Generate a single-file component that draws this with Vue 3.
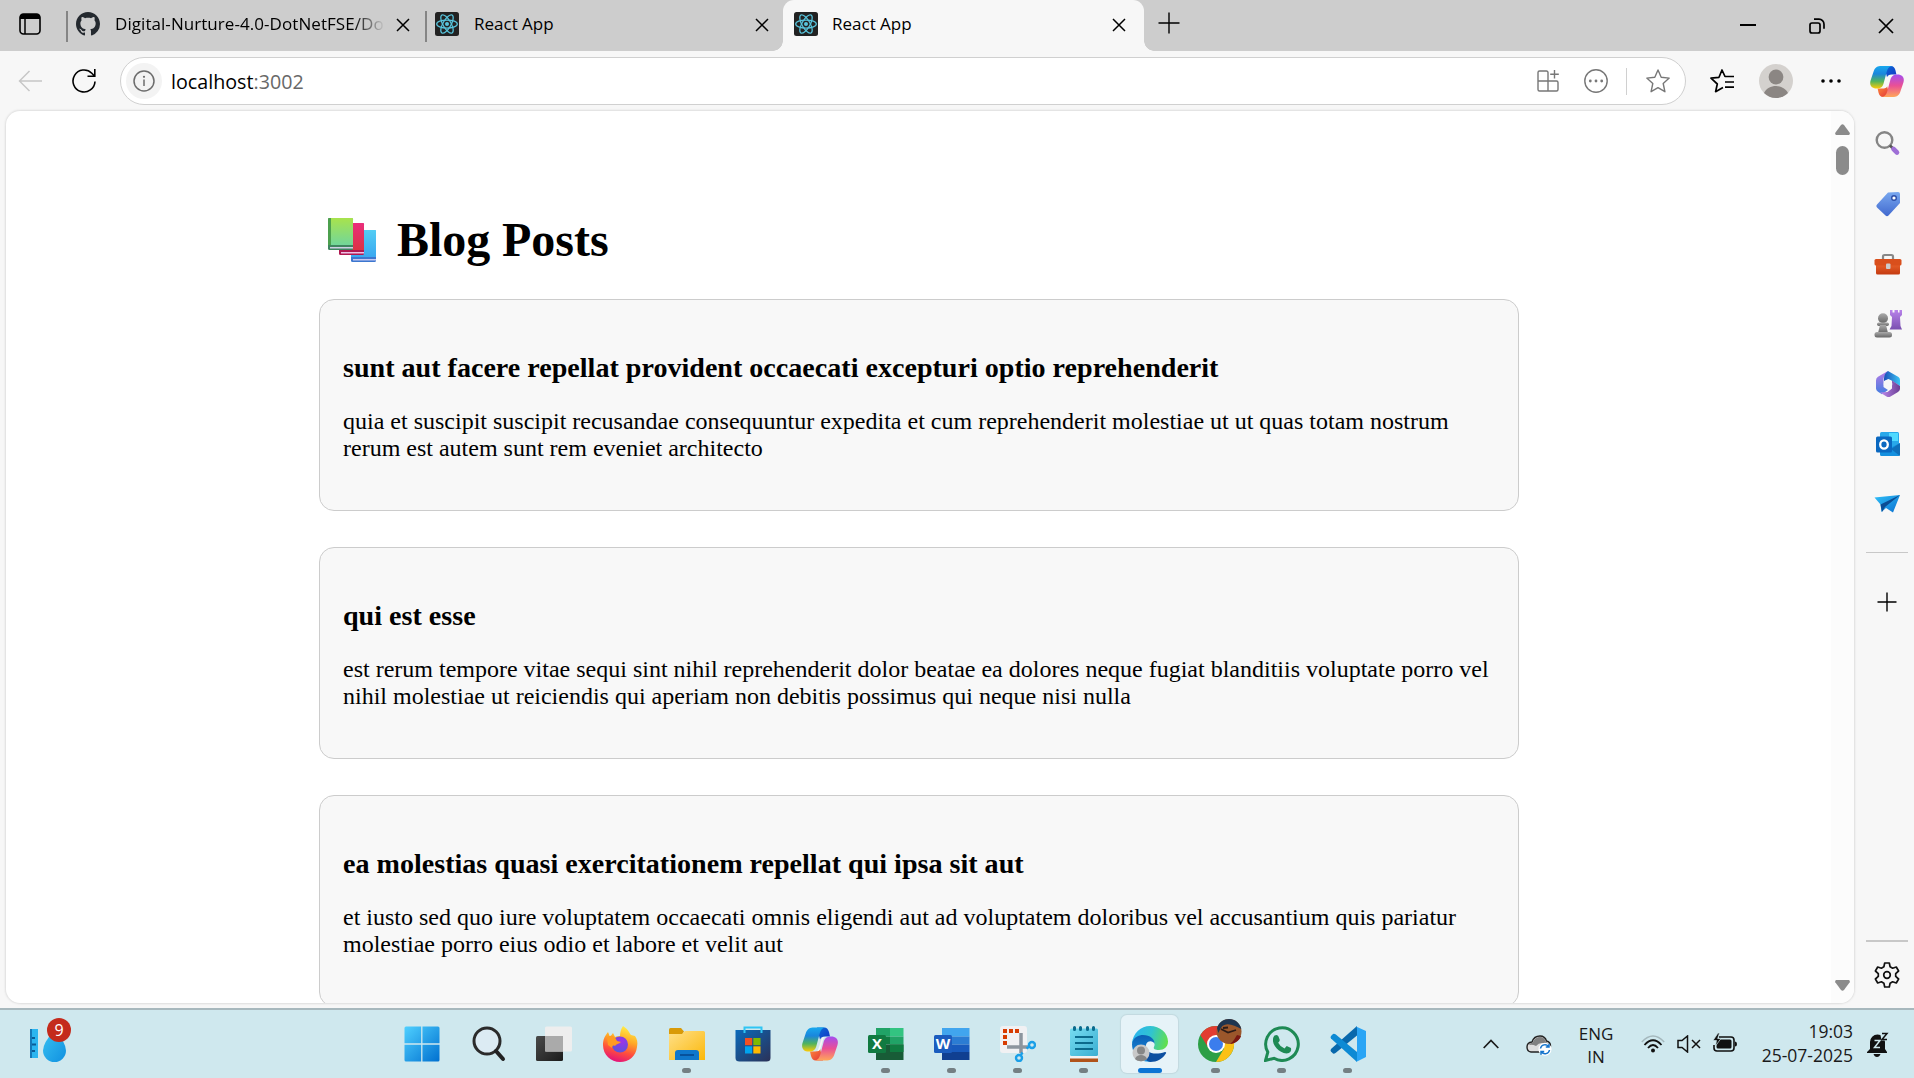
<script setup>
const posts = [
  {
    title: 'sunt aut facere repellat provident occaecati excepturi optio reprehenderit',
    body: 'quia et suscipit suscipit recusandae consequuntur expedita et cum reprehenderit molestiae ut ut quas totam nostrum rerum est autem sunt rem eveniet architecto',
  },
  {
    title: 'qui est esse',
    body: 'est rerum tempore vitae sequi sint nihil reprehenderit dolor beatae ea dolores neque fugiat blanditiis voluptate porro vel nihil molestiae ut reiciendis qui aperiam non debitis possimus qui neque nisi nulla',
  },
  {
    title: 'ea molestias quasi exercitationem repellat qui ipsa sit aut',
    body: 'et iusto sed quo iure voluptatem occaecati omnis eligendi aut ad voluptatem doloribus vel accusantium quis pariatur molestiae porro eius odio et labore et velit aut',
  },
]
</script>

<template>
  <div class="screen">
    <svg class="defs" aria-hidden="true">
      <defs>
        <linearGradient id="cpA" x1="0" y1="0" x2="0" y2="1">
          <stop offset="0" stop-color="#18a8ee" /><stop offset=".35" stop-color="#1a86dc" />
          <stop offset=".68" stop-color="#52b45c" /><stop offset="1" stop-color="#ffcb05" />
        </linearGradient>
        <linearGradient id="cpB" x1="0" y1="0" x2="0" y2="1">
          <stop offset="0" stop-color="#a44df0" /><stop offset=".5" stop-color="#ea5095" />
          <stop offset="1" stop-color="#ffa759" />
        </linearGradient>
        <linearGradient id="cpC" x1="0" y1="0" x2="1" y2="1">
          <stop offset="0" stop-color="#0a6fd8" /><stop offset="1" stop-color="#1434c4" />
        </linearGradient>
        <linearGradient id="cpD" x1="0" y1="0" x2="1" y2="1">
          <stop offset="0" stop-color="#ff8d3a" /><stop offset="1" stop-color="#e0303a" />
        </linearGradient>
        <linearGradient id="win" x1="0" y1="0" x2="1" y2="1">
          <stop offset="0" stop-color="#4fd0ff" /><stop offset="1" stop-color="#0070d0" />
        </linearGradient>
        <linearGradient id="purp" x1="0" y1="0" x2="0" y2="1">
          <stop offset="0" stop-color="#b882ea" /><stop offset="1" stop-color="#7a50b0" />
        </linearGradient>
        <linearGradient id="grey" x1="0" y1="0" x2="0" y2="1">
          <stop offset="0" stop-color="#aaa" /><stop offset="1" stop-color="#666" />
        </linearGradient>
        <linearGradient id="tag" x1="0" y1="0" x2="0" y2="1">
          <stop offset="0" stop-color="#79a8ef" /><stop offset="1" stop-color="#4169cf" />
        </linearGradient>
        <linearGradient id="box" x1="0" y1="0" x2="0" y2="1">
          <stop offset="0" stop-color="#e8612a" /><stop offset="1" stop-color="#c43a10" />
        </linearGradient>
        <linearGradient id="plane" x1="0" y1="0" x2="1" y2="1">
          <stop offset="0" stop-color="#2fc0f8" /><stop offset="1" stop-color="#0a6fd0" />
        </linearGradient>
        <linearGradient id="folder" x1="0" y1="0" x2="1" y2="1">
          <stop offset="0" stop-color="#ffe08a" /><stop offset="1" stop-color="#fbb80a" />
        </linearGradient>
        <linearGradient id="store" x1="0" y1="0" x2="1" y2="1">
          <stop offset="0" stop-color="#0a6abb" /><stop offset="1" stop-color="#2b3157" />
        </linearGradient>
        <linearGradient id="fox" x1=".7" y1="0" x2=".4" y2="1">
          <stop offset="0" stop-color="#fff24a" /><stop offset=".4" stop-color="#ffa726" />
          <stop offset=".7" stop-color="#ff4f3c" /><stop offset="1" stop-color="#e3127a" />
        </linearGradient>
        <radialGradient id="foxin" cx=".6" cy=".3" r=".8">
          <stop offset="0" stop-color="#a032e8" /><stop offset="1" stop-color="#5158d8" />
        </radialGradient>
        <linearGradient id="edgeTop" x1="0" y1=".4" x2="1" y2=".6">
          <stop offset="0" stop-color="#2ab4f0" /><stop offset=".5" stop-color="#31c4cf" />
          <stop offset="1" stop-color="#62e04a" />
        </linearGradient>
        <linearGradient id="edgeMid" x1="0" y1="0" x2="0" y2="1">
          <stop offset="0" stop-color="#0c5fb4" /><stop offset="1" stop-color="#1a93e4" />
        </linearGradient>
        <linearGradient id="drop" x1="0" y1="0" x2="1" y2="1">
          <stop offset="0" stop-color="#38c2f2" /><stop offset="1" stop-color="#1090e0" />
        </linearGradient>
        <linearGradient id="tvD" x1="0" y1="0" x2="1" y2="1">
          <stop offset="0" stop-color="#4a4a4a" /><stop offset="1" stop-color="#1b1b1b" />
        </linearGradient>
        <linearGradient id="note" x1="0" y1="0" x2="1" y2="1">
          <stop offset="0" stop-color="#76dcf0" /><stop offset="1" stop-color="#3aaed2" />
        </linearGradient>
        <linearGradient id="bookG" x1="0" y1="0" x2="0" y2="1">
          <stop offset="0" stop-color="#a8e34c" /><stop offset="1" stop-color="#72d69a" />
        </linearGradient>
        <linearGradient id="bookR" x1="0" y1="0" x2="0" y2="1">
          <stop offset="0" stop-color="#ea2d7c" /><stop offset="1" stop-color="#dc3344" />
        </linearGradient>
        <linearGradient id="bookB" x1="0" y1="0" x2="0" y2="1">
          <stop offset="0" stop-color="#53cdf4" /><stop offset="1" stop-color="#3aa8f0" />
        </linearGradient>
        <linearGradient id="m365a" x1="0" y1="0" x2="1" y2="0">
          <stop offset="0" stop-color="#1a4fb8" /><stop offset="1" stop-color="#3cc4f4" />
        </linearGradient>
        <linearGradient id="m365b" x1="0" y1="0" x2="0" y2="1">
          <stop offset="0" stop-color="#b77be6" /><stop offset="1" stop-color="#3f7de0" />
        </linearGradient>
        <linearGradient id="m365c" x1="0" y1="0" x2="1" y2="0">
          <stop offset="0" stop-color="#c08cf0" /><stop offset="1" stop-color="#6a3d94" />
        </linearGradient>
      </defs>
      <symbol id="copilot" viewBox="0 0 36 33">
        <path d="M15 0h7c3 0 4.200 2 5 4.500L28 9h-5c-3 0-4 1-5 3z" fill="url(#cpC)" />
        <path d="M21 33h-7c-3 0-4.200-2-5-4.500L8 24h5c3 0 4-1 5-3z" fill="url(#cpD)" />
        <path d="M12 0h11c-3 .6-4.500 3-5.300 6L14.500 18c-1 4-3 6-7.500 6C1 24-.8 20 .5 15.500L4 5C5.500 1.300 8 0 12 0z" fill="url(#cpA)" />
        <path d="M24 33H13c3-.6 4.500-3 5.300-6L21.500 15c1-4 3-6 7.500-6 6 0 7.800 4 6.500 8.500L32 28c-1.500 3.700-4 5-8 5z" fill="url(#cpB)" />
        <path d="M19.500 11.500q.8-2 3-2-1.200 1.500-1.700 3.500l-2.500 8.500q-.7 2.300-3.300 2.300 1.300-1.500 2-4z" fill="#f7f7f7" />
      </symbol>
      <symbol id="react" viewBox="0 0 24 24">
        <rect width="24" height="24" rx="2.500" fill="#222" />
        <g fill="none" stroke="#58c4dc" stroke-width="1.250">
          <ellipse cx="12" cy="12" rx="10.300" ry="4" />
          <ellipse cx="12" cy="12" rx="10.300" ry="4" transform="rotate(60 12 12)" />
          <ellipse cx="12" cy="12" rx="10.300" ry="4" transform="rotate(120 12 12)" />
        </g>
        <circle cx="12" cy="12" r="2" fill="#58c4dc" />
      </symbol>
      <symbol id="x" viewBox="0 0 14 14">
        <path d="M1 1l12 12M13 1L1 13" fill="none" stroke="#000" stroke-width="1.500" />
      </symbol>
    </svg>

    <header class="tabs">
      <svg class="tab-actions" viewBox="0 0 22 22" width="22" height="22">
        <rect x="1" y="1" width="20" height="20" rx="3.500" fill="none" stroke="#000" stroke-width="1.600" />
        <path d="M1 6V4a3 3 0 0 1 3-3h14a3 3 0 0 1 3 3v2z" /><path d="M6 6v15" stroke="#000" stroke-width="1.500" />
      </svg>
      <div class="tab tab-github">
        <svg class="fav" viewBox="0 0 16 16" width="24" height="24">
          <path fill="#24292f" d="M8 0C3.580 0 0 3.580 0 8c0 3.540 2.290 6.530 5.470 7.590.4.070.55-.17.55-.38 0-.19-.01-.82-.01-1.490-2.010.37-2.530-.49-2.690-.94-.09-.23-.48-.94-.82-1.130-.28-.15-.68-.52-.01-.53.63-.01 1.080.58 1.230.82.72 1.210 1.870.87 2.330.66.070-.52.28-.87.51-1.070-1.780-.2-3.640-.89-3.640-3.950 0-.87.31-1.590.82-2.150-.08-.2-.36-1.020.08-2.120 0 0 .67-.21 2.200.82.64-.18 1.320-.27 2-.27s1.360.09 2 .27c1.530-1.040 2.200-.82 2.200-.82.44 1.100.16 1.920.08 2.120.51.56.82 1.270.82 2.150 0 3.070-1.870 3.750-3.650 3.950.29.25.54.73.54 1.480 0 1.070-.01 1.930-.01 2.200 0 .21.15.46.55.38A8.010 8.010 0 0 0 16 8c0-4.420-3.580-8-8-8z" />
        </svg>
        <span class="tab-title faded">Digital-Nurture-4.0-DotNetFSE/Do</span>
        <svg class="close" width="14" height="14"><use href="#x" /></svg>
      </div>
      <div class="tab tab-react">
        <svg class="fav" width="24" height="24"><use href="#react" /></svg>
        <span class="tab-title">React App</span>
        <svg class="close" width="14" height="14"><use href="#x" /></svg>
      </div>
      <div class="tab tab-active">
        <svg class="fav" width="24" height="24"><use href="#react" /></svg>
        <span class="tab-title">React App</span>
        <svg class="close" width="14" height="14"><use href="#x" /></svg>
      </div>
      <svg class="new-tab" viewBox="0 0 22 22" width="22" height="22"><path d="M11 .5v21M.5 11h21" stroke="#000" stroke-width="1.400" /></svg>
      <div class="controls">
        <svg viewBox="0 0 16 16" width="16" height="16"><path d="M0 7h16" stroke="#000" stroke-width="2" /></svg>
        <svg viewBox="0 0 16 16" width="16" height="16" fill="none" stroke="#000" stroke-width="1.700">
          <rect x="1" y="5" width="10" height="10" rx="2" /><path d="M5 1.200h5a5 5 0 0 1 5 5v4.500" />
        </svg>
        <svg viewBox="0 0 16 16" width="16" height="16"><path d="M1 1l14 14M15 1L1 15" stroke="#000" stroke-width="1.700" /></svg>
      </div>
    </header>

    <div class="toolbar">
      <svg class="back" viewBox="0 0 24 22" width="24" height="22" fill="none" stroke="#c6c6c6" stroke-width="1.500"><path d="M11.500 1L1.500 11l10 10M1.500 11H24" /></svg>
      <svg class="reload" viewBox="0 0 24 24" width="24" height="24" fill="none" stroke="#000" stroke-width="1.600">
        <path d="M23 12.500A11 11 0 1 1 19.800 4.200L22.500 7M22.800 0v7.200h-7.300" />
      </svg>
      <div class="address">
        <div class="info">
          <svg viewBox="0 0 22 22" width="22" height="22"><circle cx="11" cy="11" r="10" fill="none" stroke="#6c6c6c" stroke-width="1.500" /><circle cx="11" cy="6.800" r="1.100" fill="#6c6c6c" /><path d="M11 9.500v6.500" stroke="#6c6c6c" stroke-width="1.500" /></svg>
        </div>
        <span class="url">localhost<span>:3002</span></span>
        <div class="address-icons">
          <svg viewBox="0 0 22 22" width="22" height="22" fill="none" stroke="#777" stroke-width="1.400">
            <path d="M11 11V2.500A1.500 1.500 0 0 0 9.500 1h-7A1.500 1.500 0 0 0 1 2.500v17A1.500 1.500 0 0 0 2.500 21h17a1.500 1.500 0 0 0 1.500-1.500v-7a1.500 1.500 0 0 0-1.500-1.500H1M11 11v10M17.500 0v8.500M13.200 4.300h8.600" />
          </svg>
          <svg viewBox="0 0 24 24" width="24" height="24"><circle cx="12" cy="12" r="11.200" fill="none" stroke="#777" stroke-width="1.400" /><g fill="#777"><circle cx="6.300" cy="12" r="1.400" /><circle cx="12" cy="12" r="1.400" /><circle cx="17.700" cy="12" r="1.400" /></g></svg>
          <i></i>
          <svg viewBox="0 0 24 24" width="24" height="24" fill="none" stroke="#777" stroke-width="1.400" stroke-linejoin="round"><path d="M12 1l3.200 7.200 8 .9-6 5.400 1.700 8.200-6.900-4-6.900 4 1.700-8.200-6-5.400 8-.9z" /></svg>
        </div>
      </div>
      <svg class="favorites" viewBox="0 0 24 24" width="24" height="24" fill="none" stroke="#000" stroke-width="1.700" stroke-linejoin="round">
        <path d="M13 18.500l-7.400 4.200 1.700-7.700-6.300-5.800 8-.9L12 1l3 6.500h9M15 13h9M15 18.200h9" />
      </svg>
      <svg class="profile" viewBox="0 0 34 34" width="34" height="34">
        <circle cx="17" cy="17" r="17" fill="#d4d1ce" /><circle cx="17" cy="13" r="7.400" fill="#8b8683" />
        <path d="M5 29c2-4.500 7-7 12-7s10 2.500 12 7c-3 3-7.500 5-12 5s-9-2-12-5z" fill="#8b8683" />
      </svg>
      <svg class="more" viewBox="0 0 20 4" width="20" height="4"><circle cx="2" cy="2" r="1.800" /><circle cx="10" cy="2" r="1.800" /><circle cx="18" cy="2" r="1.800" /></svg>
      <svg class="copilot" width="34" height="31"><use href="#copilot" /></svg>
    </div>

    <div class="middle">
      <div class="viewport">
        <main class="page">
          <h1>
            <svg viewBox="0 0 48 44" width="48" height="44">
              <rect x="23" y="12" width="25" height="32" rx="1.500" fill="#3c77cf" /><path d="M24 12h23a1 1 0 0 1 1 1v26H23V13z" fill="url(#bookB)" /><path d="M25 41h23v1.500H25z" fill="#c5c8f2" />
              <rect x="11" y="5" width="25" height="32" rx="1.500" fill="#b01850" /><path d="M12 5h23a1 1 0 0 1 1 1v26H11V6z" fill="url(#bookR)" /><path d="M13 34h23v1.500H13z" fill="#ecc0e4" />
              <rect width="25" height="32" rx="1.500" fill="#3f8560" /><path d="M3 0h21a1 1 0 0 1 1 1v26H3z" fill="url(#bookG)" /><path d="M0 1a1 1 0 0 1 1-1h2v27H0z" fill="#4ca04e" /><path d="M2 29h23v1.500H2z" fill="#cfd0e6" />
            </svg>
            <span>Blog Posts</span>
          </h1>
          <article v-for="post in posts" :key="post.title">
            <h3>{{ post.title }}</h3>
            <p>{{ post.body }}</p>
          </article>
        </main>
        <div class="scrollbar">
          <svg viewBox="0 0 15 11" width="15" height="11"><path d="M6 1q1.500-1.600 3 0l5.700 7.800q.6 2-1 2.200H1.300q-1.600-.2-1-2.200z" fill="#8b8b8b" /></svg>
          <div class="thumb"></div>
          <svg class="down" viewBox="0 0 15 11" width="15" height="11"><path d="M6 10q1.500 1.600 3 0l5.700-7.800q.6-2-1-2.200H1.300q-1.600.2-1 2.200z" fill="#8b8b8b" /></svg>
        </div>
      </div>
      <aside class="sidebar">
        <svg viewBox="0 0 28 28" width="28" height="28"><circle cx="10.500" cy="11" r="7.800" fill="none" stroke="#858585" stroke-width="2.400" /><path d="M16 16.500l3 3" stroke="#555" stroke-width="2.600" /><path d="M19.500 20l3.500 3.500" stroke="#9e6fd6" stroke-width="4.600" stroke-linecap="round" /></svg>
        <svg viewBox="0 0 28 28" width="28" height="28"><path d="M14 2.500L24 2q2 0 2 2v9l-11.500 12.500q-1.500 1.500-3 0l-8.500-8q-1.500-1.500 0-3z" fill="url(#tag)" /><circle cx="20" cy="8" r="2.300" fill="#fff" stroke="#2e4fa8" stroke-width="1.400" /></svg>
        <svg viewBox="0 0 28 28" width="28" height="28"><path d="M9 9V6.500Q9 5 10.500 5h7q1.500 0 1.500 1.500V9" fill="none" stroke="#888" stroke-width="2.200" /><path d="M2 14h24v9q0 1.500-1.500 1.500h-21Q2 24.500 2 23z" fill="url(#box)" /><rect x=".5" y="9" width="27" height="6.500" rx="1.500" fill="#d94f1c" /><rect x="12" y="13.500" width="4.500" height="5.500" rx="1" fill="#ccc" /></svg>
        <svg viewBox="0 0 28 28" width="28" height="28"><path d="M16 0h2.500v2.500h2V0H24v2.500h1.500V0H28v5l-2 2 .5 9 1.500 3.500H15.500L17.500 16 18 7l-2-2z" fill="url(#purp)" /><g fill="url(#grey)"><circle cx="9" cy="8.300" r="5" /><rect x="3" y="12.500" width="12" height="3.500" rx="1.700" /><path d="M6 15h6l2 8H4z" /><rect x=".5" y="22" width="17.500" height="5.500" rx="2.500" /></g></svg>
        <svg viewBox="0 0 28 28" width="28" height="28"><path d="M13 1.500L4 6.800Q2 8 2 10.500v8q0 2 2 3.300l4 2.500L14 20l-4.500-3v-7q0-5 5-8.500z" fill="url(#m365b)" /><path d="M10 8.500q0-5 4-7.500l10.500 6Q26 8 26 10v6l-8.500-5.500-3-1.500L10 11z" fill="url(#m365a)" /><path d="M6 22.500l7.500-.5L18 18.500V10.500L26 16v3q0 1.700-2 3l-7.500 4.500q-2 1.200-4 0z" fill="url(#m365c)" /><circle cx="14" cy="14" r="4.300" fill="#f7f7f7" /></svg>
        <svg viewBox="0 0 28 28" width="28" height="28"><rect x="6" y="2" width="19" height="15" rx="1.500" fill="#28a8ea" /><rect x="15" y="3" width="9" height="8" fill="#50d9ff" /><path d="M6 14l10 4 10-5v11.500q0 1.500-1.500 1.500h-17Q6 26 6 24.500z" fill="#1490df" /><path d="M17 19l9 7V13z" fill="#0a5ea8" opacity=".65" /><rect x="2" y="6.500" width="16" height="16" rx="1.500" fill="#0a68c0" /><ellipse cx="10" cy="14.500" rx="3.800" ry="4.200" fill="none" stroke="#fff" stroke-width="2.300" /></svg>
        <svg viewBox="0 0 28 28" width="28" height="28"><path d="M.5 7.500L26 5l-7 17.500-7-4.500-4.500 4-1-7.500z" fill="url(#plane)" /><path d="M6.500 14.500L26 5 11 17l-3 5z" fill="#0a4c94" /></svg>
        <hr />
        <svg class="add" viewBox="0 0 20 20" width="20" height="20"><path d="M10 .5v19M.5 10h19" stroke="#000" stroke-width="1.400" /></svg>
        <hr class="bottom" />
        <svg class="gear" viewBox="0 0 26 26" width="26" height="26" fill="none" stroke="#111" stroke-width="1.700" stroke-linejoin="round">
          <path d="M10.700 1h4.600l.8 3.800 2.500 1.400 3.700-1.200L24.600 9l-2.900 2.600v2.800l2.900 2.600-2.300 4-3.700-1.200-2.500 1.400-.8 3.800h-4.600l-.8-3.800-2.500-1.400L3.700 21l-2.300-4 2.900-2.600v-2.800L1.400 9l2.300-4 3.700 1.200 2.500-1.400z" /><circle cx="13" cy="13" r="3.300" />
        </svg>
      </aside>
    </div>

    <footer class="taskbar">
      <div class="weather">
        <svg viewBox="0 0 37 34" width="37" height="34"><rect y="1" width="8" height="29" fill="#2bb5f0" /><path d="M0 1h2v29H0z" fill="#1478b8" /><path d="M2 10h3M2 16.500h4M2 23h3" stroke="#0a5c98" stroke-width="2" /><path d="M24.500 2Q13 15 13 22.500a11.500 11.500 0 0 0 23 0Q36 15 24.500 2z" fill="url(#drop)" /></svg>
        <span>9</span>
      </div>
      <nav class="apps">
        <div class="app"><svg viewBox="0 0 36 36" width="36" height="36"><rect x=".5" y=".5" width="35" height="35" rx="1.500" fill="url(#win)" /><path d="M17.800 0v36M0 18h36" stroke="#cfe8ee" stroke-width="1.300" /></svg></div>
        <div class="app"><svg viewBox="0 0 36 36" width="36" height="36"><circle cx="17" cy="15" r="13" fill="#dcebf3" stroke="#2b2b2b" stroke-width="3" /><path d="M26 25l7 8" stroke="#222" stroke-width="4" stroke-linecap="round" /></svg></div>
        <div class="app"><svg viewBox="0 0 36 36" width="36" height="36"><rect y="10" width="27" height="25" rx="1.500" fill="url(#tvD)" /><rect x="9" y=".5" width="27" height="25" rx="1.500" fill="#eee" /><path d="M9 10h18v15.500H9z" fill="#aaa" /></svg></div>
        <div class="app"><svg viewBox="0 0 36 36" width="36" height="36"><path d="M21 0c6 4 6 7 8 9l4 1c2 3 3 6 2 11-1 9-8 15-17 15S1 29 1 19c0-6 2-9 5-13l2 5 3-4 2 4c2-1 4-1 5-1 0-4 1-7 3-10z" fill="url(#fox)" /><circle cx="18" cy="18.500" r="8" fill="url(#foxin)" /><path d="M5 12c3-4 8-2 10 3l4 1c-2 2-5 2-6 4-2-1-3 0-3 2l-4-3z" fill="#ff9a22" /></svg></div>
        <div class="app"><svg viewBox="0 0 36 36" width="36" height="36"><path d="M0 3.500Q0 2 1.500 2H12l3 3.500L13 9H0z" fill="#d99a08" /><path d="M0 8h13l3-3h18.500Q36 5 36 6.500V34H0z" fill="url(#folder)" /><path d="M6 34v-7q0-3 3-3h18q3 0 3 3v7z" fill="#0f77cb" /><path d="M11 29h14" stroke="#07519b" stroke-width="2" /></svg><i></i></div>
        <div class="app"><svg viewBox="0 0 36 36" width="36" height="36"><path d="M.5 4h35v28q0 3.500-4 3.500h-27q-4 0-4-3.500z" fill="url(#store)" /><path d="M9.500 7V1.500h17V7" fill="none" stroke="#2fc5f4" stroke-width="2" /><path d="M10 12h7.200v7.200H10z" fill="#f25022" /><path d="M18.300 12h7.200v7.200h-7.200z" fill="#7fba00" /><path d="M10 20.300h7.200v7.200H10z" fill="#00a4ef" /><path d="M18.300 20.300h7.200v7.200h-7.200z" fill="#ffb900" /></svg></div>
        <div class="app"><svg width="36" height="36"><use href="#copilot" /></svg></div>
        <div class="app"><svg viewBox="0 0 36 36" width="36" height="36"><path d="M8 2h14v8.500H8z" fill="#21a366" /><path d="M22 2h13.500v8.500H22z" fill="#33c481" /><path d="M8 10.500h14v8H8z" fill="#107c41" /><path d="M22 10.500h13.500v8H22z" fill="#21a366" /><path d="M8 18.500h27.500V34H8z" fill="#185c37" /><path d="M22 18.500h13.500v7.500H22z" fill="#107c41" /><rect y="9" width="18" height="18" rx="1.500" fill="#117a41" /><text x="9" y="23" text-anchor="middle" class="office">X</text></svg><i></i></div>
        <div class="app"><svg viewBox="0 0 36 36" width="36" height="36"><path d="M8 2h27.500v8.500H8z" fill="#41a5ee" /><path d="M8 10.500h27.500v8H8z" fill="#2b7cd3" /><path d="M8 18.500h27.500V26H8z" fill="#185abd" /><path d="M8 26h27.500v8H8z" fill="#103f91" /><rect y="9" width="18" height="18" rx="1.500" fill="#1b5cbe" /><text x="9" y="23" text-anchor="middle" class="office">W</text></svg><i></i></div>
        <div class="app"><svg viewBox="0 0 36 36" width="36" height="36"><rect width="27" height="27" rx="3" fill="#f1f1f3" /><path d="M5 19V5h15" fill="none" stroke="#d83b01" stroke-width="4" stroke-dasharray="4 2" /><path d="M21 7v20M7 21h21" stroke="#8d959e" stroke-width="3.500" /><g fill="none" stroke="#1a9fe8" stroke-width="2.400"><circle cx="19" cy="32" r="3" /><circle cx="32" cy="19" r="3" /><path d="M20.500 29.500l2-3M29.500 20.500l-3 2" /></g></svg><i></i></div>
        <div class="app"><svg viewBox="0 0 36 36" width="36" height="36"><path d="M4 30h28v6H4z" fill="#b0531a" /><path d="M4 29h28v3.500H4z" fill="#f4f1f0" /><rect x="4" y="2.500" width="28" height="27.500" rx="1.500" fill="url(#note)" /><path d="M9 11h18M9 17h18M9 23h18" stroke="#0b6a8c" stroke-width="2" /><path d="M8.500 1.500v2M14.500 1.500v2M21.500 1.500v2M27.500 1.500v2" stroke="#0b6a8c" stroke-width="3" stroke-linecap="round" /></svg><i></i></div>
        <div class="app active"><svg viewBox="0 0 36 36" width="36" height="36"><path d="M0 17C1 7 9 0 18 0c10 0 18 7 18 15.500 0 5.500-4 8.500-9 8.500-4 0-6-1.300-5-3 2-4-1-8-5-8z" fill="url(#edgeTop)" /><path d="M0 18C1 11 7 9 11 9c7 0 12 4 11.500 9-1-3-6-4-8-.5-3 6 1 13 10.500 15-3 3-8 3.500-11 3C5 34 0 26 0 18z" fill="url(#edgeMid)" /><path d="M13 19c0 7 8 11 20 7q2 0 .5 2c-3 4.500-8 8-15.500 8-7-2-10-11-5-17z" fill="#0c4fa0" /><circle cx="9" cy="27" r="8.500" fill="#c8c8c8" /><circle cx="9" cy="24.500" r="4" fill="#868686" /><path d="M3 33c1-3 3.500-4 6-4s5 1 6 4c-3 3-9 3-12 0z" fill="#868686" /></svg><i></i></div>
        <div class="app"><svg class="wide" viewBox="0 0 44 43" width="44" height="43"><g transform="translate(0 7)"><circle cx="18" cy="18" r="18" fill="#2c9f46" /><path d="M2.400 9A18 18 0 0 1 33.600 9H18z" fill="#e23c30" /><path d="M2.400 9L10.500 22 18 9z" fill="#e23c30" /><path d="M33.600 9A18 18 0 0 1 18 36l8-13.500L18 9z" fill="#fbc116" /><circle cx="18" cy="18" r="9" fill="#fff" /><circle cx="18" cy="18" r="7" fill="#3b7ded" /></g><circle cx="31" cy="12.500" r="12.500" fill="#9b572b" /><path d="M19 9C21 3 26 0 31 0c6 0 11 4 12.300 10-6-3-12-6-17-4-3 1-4 4-6 8z" fill="#1f3550" /><path d="M23 10l7 3.500 8-2.500M25 9l5-.5" fill="none" stroke="#2d1c18" stroke-width="1.800" /><path d="M43 17c-1 4-6 8-11 8 4-3 5-6 7-9z" fill="#7a1812" /></svg><i></i></div>
        <div class="app"><svg viewBox="0 0 36 36" width="36" height="36"><path d="M1.500 34.500l2.300-8.400A16.300 16.300 0 1 1 10 32.300z" fill="none" stroke="#1e8a54" stroke-width="3" /><path d="M10.500 9.500q3-1.500 4 1l1.300 3.500q0 1-1.600 2.700 2 4 6.300 5.800l2.200-2.400 4.300 2q1.200 5-4.500 5.400C15 27 8 19 9 13q0-2 1.500-3.500z" fill="#1e8a54" /></svg><i></i></div>
        <div class="app"><svg viewBox="0 0 36 36" width="36" height="36"><path d="M27 0L1 23q-1 1.500 0 2.500l2 2q1 .5 2.500-.5L27 9.500z" fill="#0868ac" /><path d="M27 36L1 12.500Q0 11 1 10l2-2q1-.7 2.500.3L27 26z" fill="#0d8ad4" /><path d="M26 .5L36 5v26l-10 5q1-1 1-3V3q0-2-1-2.500z" fill="#2aa5f5" /></svg><i></i></div>
      </nav>
      <div class="tray">
        <svg class="chev" viewBox="0 0 16 10" width="16" height="10" fill="none" stroke="#1a1a1a" stroke-width="1.700"><path d="M.7 9L8 1.500 15.300 9" /></svg>
        <svg class="cloud" viewBox="0 0 26 22" width="26" height="22"><path d="M5 18q-4-.5-4-5 0-4.500 5-5 2-6 8-6 5 0 6.500 5 4 1 4 5 0 6-4 6z" fill="#ddd" stroke="#222" stroke-width="1.400" /><path d="M3 11q1-2.500 3.700-2.500Q9 3 14 3q4.500 0 6 5 3 1 3 3l-7-2q-3.500 0-6 3-3.500-2-7-1z" fill="#808080" /><circle cx="19" cy="15.200" r="6.500" fill="#fff" /><g fill="none" stroke="#1474cc" stroke-width="1.500"><path d="M14.500 14.500a4.500 4.500 0 0 1 8-2M23.500 16a4.500 4.500 0 0 1-8 2M23 9.800V13h-3.200M15 20.700V17.500h3.200" /></g></svg>
        <div class="lang"><span>ENG</span><span>IN</span></div>
        <svg class="wifi" viewBox="0 0 24 18" width="24" height="18" fill="none" stroke="#111" stroke-width="1.800"><path d="M.8 7q11.200-12 22.400 0" stroke="#a5b8bd" stroke-width="1.400" /><path d="M3.500 10q8.500-9.500 17 0M7 13q5-6 10 0" /><circle cx="12" cy="15.500" r="2" fill="#111" stroke="none" /></svg>
        <svg class="vol" viewBox="0 0 24 18" width="24" height="18" fill="none" stroke="#111" stroke-width="1.500"><path d="M1 5.500h4L10.500 1v16L5 12.500H1zM15 5l8 8M23 5l-8 8" /></svg>
        <svg class="bat" viewBox="0 0 24 20" width="24" height="20"><path d="M6 4h12q3 0 3 3v8q0 3-3 3H4q-3 0-3-3v-3" fill="none" stroke="#111" stroke-width="1.600" /><rect x="3.500" y="6.500" width="15" height="9" rx="1.500" fill="#111" /><path d="M22 8.500q2 0 2 2.500t-2 2.500z" fill="#111" /><path d="M5 0L0 7.500h3.500L2.500 13 8 5.500H4.700L6.500 0z" fill="#111" stroke="#cfe8ee" stroke-width=".7" /></svg>
        <div class="clock"><span>19:03</span><span>25-07-2025</span></div>
        <svg class="bell" viewBox="0 0 22 26" width="22" height="26"><path d="M3 18V11a7.500 7.500 0 0 1 15 0v7l2 3v1H0v-1zM6.500 23h7q-1 3-3.500 3t-3.500-3z" fill="#111" /><path d="M7.500 9.500H13l-5.500 7H13" fill="none" stroke="#cfe8ee" stroke-width="1.500" /><path d="M13 1h9v8.500h-7.500z" fill="#cfe8ee" /><path d="M15 2.500h5l-5 6h5" fill="none" stroke="#111" stroke-width="1.500" /></svg>
      </div>
    </footer>
  </div>
</template>

<style>
body { margin: 0; overflow: hidden; }
</style>

<style scoped>
* { box-sizing: border-box; }
svg { display: block; flex: none; }
.screen { width: 1914px; height: 1078px; display: flex; flex-direction: column; background: #f7f7f7; color: #000; font-family: "Open Sans", "Noto Sans", sans-serif; font-size: 17px; overflow: hidden; }
.defs { position: absolute; width: 0; height: 0; }

.tabs { height: 51px; flex: none; display: flex; background: #cdcdcd; }
.tab-actions { margin: 13px 25px 0 19px; }
.tab { position: relative; display: flex; height: 51px; padding-top: 12px; }
.tab::before { content: ""; width: 2px; height: 31px; margin-top: -1px; background: #858585; flex: none; }
.tab-github { width: 359px; }
.tab-react { width: 358px; }
.tab-active { width: 361px; background: #f7f7f7; border-radius: 11px 11px 0 0; }
.tab-active::before { visibility: hidden; }
.tab-active::after { content: ""; position: absolute; left: -10px; right: -10px; bottom: 0; height: 10px; background: radial-gradient(circle at 0 0, transparent 9.500px, #f7f7f7 10px) left / 10px 10px no-repeat, radial-gradient(circle at 100% 0, transparent 9.500px, #f7f7f7 10px) right / 10px 10px no-repeat; }
.fav { margin-left: 8px; }
.tab-active .fav { margin-left: 9px; }
.tab-title { margin-left: 15px; width: 270px; height: 24px; line-height: 24px; white-space: nowrap; }
.tab-active .tab-title { width: 269px; margin-left: 14px; }
.faded { letter-spacing: .06px; -webkit-mask-image: linear-gradient(90deg, #000 238px, transparent 270px); mask-image: linear-gradient(90deg, #000 238px, transparent 270px); }
.close { margin: 6px 0 0 11px; }
.new-tab { margin: 12px 0 0 14px; }
.controls { display: flex; gap: 53px; margin: 18px 20px 0 auto; }

.toolbar { height: 59px; flex: none; display: flex; align-items: center; padding-top: 1px; }
.back { margin-left: 18px; }
.reload { margin-left: 30px; }
.address { margin-left: 24px; width: 1566px; height: 48px; border: 1.500px solid #d0d0d0; border-radius: 24px; background: #fff; display: flex; align-items: center; }
.info { width: 36px; height: 36px; margin-left: 5px; border-radius: 50%; background: #f3f3f3; display: grid; place-items: center; }
.url { margin: 1px 0 0 9px; font-size: 19.700px; line-height: 26px; }
.url span { color: #686868; }
.address-icons { margin: 0 15px 0 auto; display: flex; align-items: center; }
.address-icons svg:nth-child(2) { margin-left: 25px; }
.address-icons i { width: 1px; height: 27px; margin: 0 19px 0 18px; background: #d0d0d0; }
.favorites { margin-left: 24px; }
.profile { margin-left: 25px; }
.more { margin-left: 28px; }
.copilot { margin-left: 29px; }

.middle { height: 898px; flex: none; display: flex; }
.viewport { width: 1848px; height: 892px; margin: 1px 0 0 6px; background: #fff; border-radius: 14px; box-shadow: 0 0 2px 1px #dedede; display: flex; overflow: hidden; }
.page { width: 1200px; margin-left: 313px; padding-top: 101px; font-family: "Liberation Serif", "Times New Roman", serif; }
h1 { display: flex; height: 56px; margin: 0 0 31px; padding-left: 9px; font-size: 48px; line-height: 55px; letter-spacing: -.05px; }
h1 svg { margin: 6px 21px 0 0; }
article { height: 212px; margin-bottom: 36px; padding: 49px 24px 0 23px; border: 1px solid #ccc; border-radius: 15px; background: #f8f8f8; }
h3 { margin: 0; font-size: 28.080px; line-height: 38px; white-space: nowrap; }
p { margin: 21px 0 0; font-size: 24px; line-height: 27px; }
.scrollbar { margin-left: auto; width: 23px; padding: 13px 0 0 4px; background: #fcfcfc; display: flex; flex-direction: column; }
.thumb { width: 13px; height: 29px; margin: 11px 0 0 1px; border-radius: 7px; background: #8b8b8b; }
.down { margin: auto 0 12px; }
.sidebar { width: 60px; display: flex; flex-direction: column; align-items: center; padding: 20px 0 0 6px; }
.sidebar > svg { margin-bottom: 32px; }
.sidebar > svg:nth-child(-n+7) { margin-left: 1px; }
.sidebar > svg:first-child { margin-top: -1px; margin-bottom: 33px; }
.sidebar hr { width: 42px; height: 1px; margin: 2px 0 39px; border: 0; background: #c8c8c8; flex: none; }
.sidebar .add { margin: 0 1px 0 0; }
.sidebar .bottom { height: 2px; margin: auto 0 20px; }
.sidebar .gear { margin-bottom: 20px; }

.taskbar { height: 70px; flex: none; display: flex; background: #cfe8ee; border-top: 2px solid #a7b8bd; color: #1a1a1a; }
.weather { position: relative; width: 37px; margin: 18px 0 0 30px; }
.weather span { position: absolute; left: 17px; top: -10px; width: 24px; height: 24px; border-radius: 50%; background: #c42b1c; color: #fff; font-size: 16px; line-height: 24px; text-align: center; }
.apps { display: flex; margin-left: 322px; }
.app { position: relative; width: 66.100px; height: 68px; padding: 16px 0 0 15px; }
.app:nth-child(n+5) { left: 1px; }
.app > i { position: absolute; left: 28px; bottom: 5px; width: 9px; height: 5px; border-radius: 3px; background: #747f83; }
.app .wide { margin-top: -7px; }
.active::before { content: ""; position: absolute; left: 4px; top: 5px; width: 57px; height: 58px; border-radius: 6px; background: #e6f3f8; box-shadow: 0 0 1px 1px #c2d9df; }
.active svg { position: relative; }
.active > i { left: 21px; width: 24px; background: #0b74d4; }
.office { fill: #fff; font: bold 15px "Open Sans", sans-serif; }
.tray { display: flex; margin-left: auto; }
.chev { margin-top: 29px; }
.cloud { margin: 24px 0 0 27px; }
.lang, .clock { display: flex; flex-direction: column; line-height: 23px; margin-top: 12px; }
.lang { width: 36px; margin-left: 26px; text-align: center; }
.wifi { margin: 25px 0 0 27px; }
.vol { margin: 25px 0 0 12px; }
.bat { margin: 23px 0 0 12px; }
.clock { width: 93px; margin: 9px 0 0 23px; text-align: right; font-size: 17.500px; line-height: 24px; }
.bell { margin: 21px 25px 0 14px; }
</style>
